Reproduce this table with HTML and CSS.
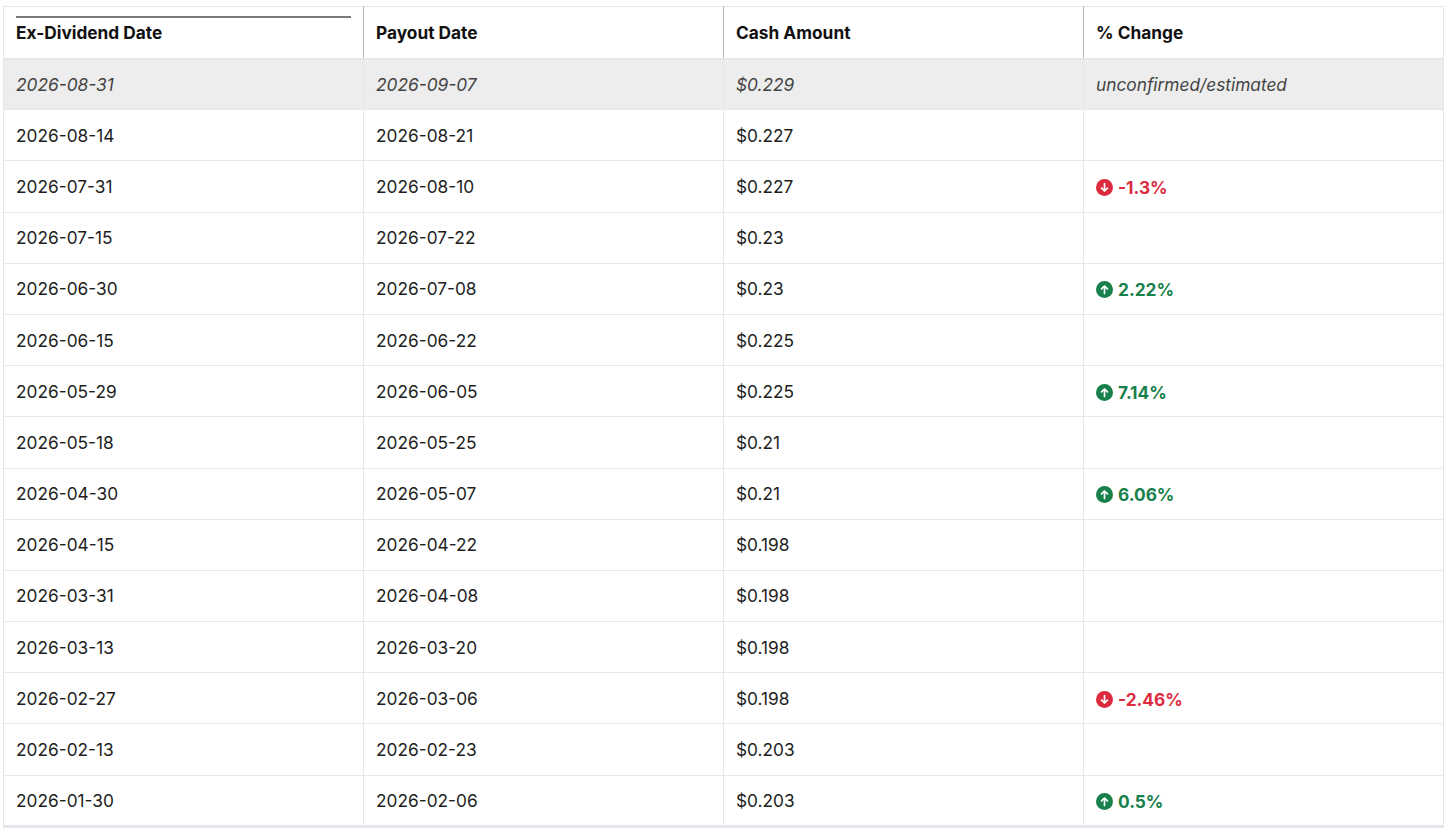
FILE: index.html
```html
<!DOCTYPE html>
<html>
<head>
<meta charset="utf-8">
<link rel="stylesheet" href="styles.css">
</head>
<body>
<div class="wrap">
<table class="divs">
<thead>
<tr><th class="sorted">Ex-Dividend Date</th><th>Payout Date</th><th>Cash Amount</th><th>% Change</th></tr>
</thead>
<tbody>
<tr class="est"><td>2026-08-31</td><td>2026-09-07</td><td>$0.229</td><td>unconfirmed/estimated</td></tr>
<tr><td>2026-08-14</td><td>2026-08-21</td><td>$0.227</td><td></td></tr>
<tr><td>2026-07-31</td><td>2026-08-10</td><td>$0.227</td><td><span class="chg down"><svg viewBox="0 0 16 16" class="ic"><circle cx="8" cy="8" r="8"/><path d="M8 4.3v7M5.2 8.5 8 11.3l2.8-2.8"/></svg>-1.3%</span></td></tr>
<tr><td>2026-07-15</td><td>2026-07-22</td><td>$0.23</td><td></td></tr>
<tr><td>2026-06-30</td><td>2026-07-08</td><td>$0.23</td><td><span class="chg up"><svg viewBox="0 0 16 16" class="ic"><circle cx="8" cy="8" r="8"/><path d="M8 11.7v-7M5.2 7.5 8 4.7l2.8 2.8"/></svg>2.22%</span></td></tr>
<tr><td>2026-06-15</td><td>2026-06-22</td><td>$0.225</td><td></td></tr>
<tr><td>2026-05-29</td><td>2026-06-05</td><td>$0.225</td><td><span class="chg up"><svg viewBox="0 0 16 16" class="ic"><circle cx="8" cy="8" r="8"/><path d="M8 11.7v-7M5.2 7.5 8 4.7l2.8 2.8"/></svg>7.14%</span></td></tr>
<tr><td>2026-05-18</td><td>2026-05-25</td><td>$0.21</td><td></td></tr>
<tr><td>2026-04-30</td><td>2026-05-07</td><td>$0.21</td><td><span class="chg up"><svg viewBox="0 0 16 16" class="ic"><circle cx="8" cy="8" r="8"/><path d="M8 11.7v-7M5.2 7.5 8 4.7l2.8 2.8"/></svg>6.06%</span></td></tr>
<tr><td>2026-04-15</td><td>2026-04-22</td><td>$0.198</td><td></td></tr>
<tr><td>2026-03-31</td><td>2026-04-08</td><td>$0.198</td><td></td></tr>
<tr><td>2026-03-13</td><td>2026-03-20</td><td>$0.198</td><td></td></tr>
<tr><td>2026-02-27</td><td>2026-03-06</td><td>$0.198</td><td><span class="chg down"><svg viewBox="0 0 16 16" class="ic"><circle cx="8" cy="8" r="8"/><path d="M8 4.3v7M5.2 8.5 8 11.3l2.8-2.8"/></svg>-2.46%</span></td></tr>
<tr><td>2026-02-13</td><td>2026-02-23</td><td>$0.203</td><td></td></tr>
<tr><td>2026-01-30</td><td>2026-02-06</td><td>$0.203</td><td><span class="chg up"><svg viewBox="0 0 16 16" class="ic"><circle cx="8" cy="8" r="8"/><path d="M8 11.7v-7M5.2 7.5 8 4.7l2.8 2.8"/></svg>0.5%</span></td></tr>
</tbody>
</table>
</div>
</body>
</html>
```
FILE: styles.css
```css
html, body {
  margin: 0;
  padding: 0;
  background: #ffffff;
}
body {
  font-family: Inter, "Noto Sans", "Liberation Sans", sans-serif;
  color: #1a1a1a;
}
.wrap {
  padding: 6px 0 0 3px;
}
.divs {
  border-collapse: collapse;
  width: 1441px;
  table-layout: fixed;
  border: 1px solid #e3e6ea;
  border-bottom: 3px solid #e3e6ea;
}
.divs th, .divs td {
  text-align: left;
  font-size: 17.3px;
  padding: 0 12px;
  height: 51.2px;
  box-sizing: border-box;
}
.divs th {
  font-weight: 700;
  color: #111;
  height: 52px;
  border-left: 1px solid #b8b8b8;
  border-bottom: 2px solid #e3e6ea;
  position: relative;
}
.divs th:first-child {
  border-left: none;
}
.divs th.sorted::before {
  content: "";
  position: absolute;
  left: 12px;
  right: 12px;
  top: 9px;
  height: 2px;
  background: #7a7a7a;
}
.divs td {
  font-weight: 400;
  color: #1e1e1e;
  border-left: 1px solid #e6e8eb;
  border-bottom: 1px solid #e6e8eb;
}
.divs td:first-child {
  border-left: none;
}
.divs tr.est td {
  background: #ededed;
  font-style: italic;
  color: #444;
}
.chg {
  display: inline-flex;
  align-items: center;
  gap: 5px;
  font-weight: 650;
  vertical-align: middle;
}
.chg.down { color: #dc2a3f; }
.chg.up { color: #17804b; }
.ic {
  width: 17px;
  height: 17px;
  display: block;
}
.ic path {
  fill: none;
  stroke: #fff;
  stroke-width: 1.6;
  stroke-linecap: round;
  stroke-linejoin: round;
}
.down .ic circle { fill: #dc2a3f; }
.up .ic circle { fill: #17804b; }
```
